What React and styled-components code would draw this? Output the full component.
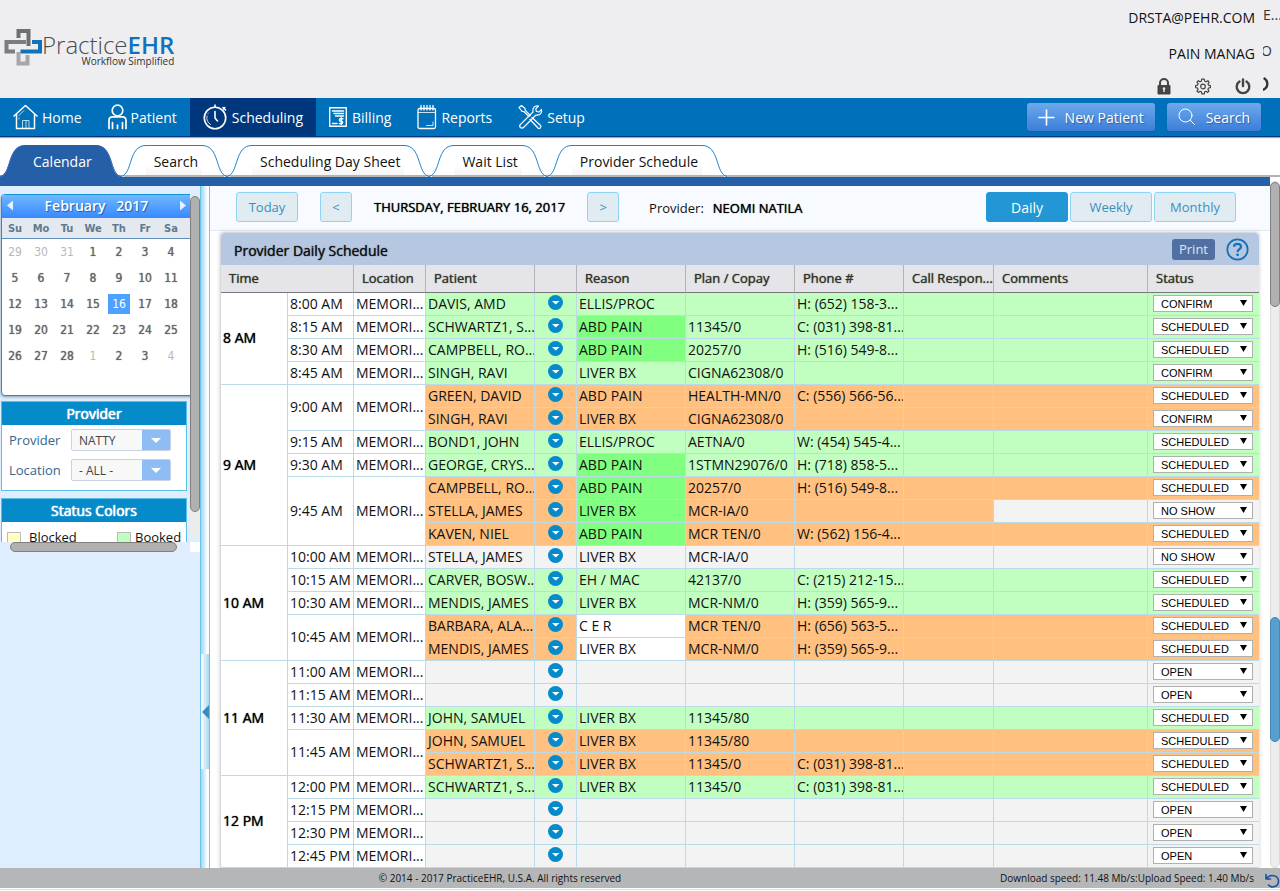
import React from 'react'
import styled, { createGlobalStyle, css } from 'styled-components'

const GlobalStyle = createGlobalStyle`
    * {
        box-sizing: border-box;
    }

    body {
        margin: 0;
        background: #ffffff;
        color: #111111;
        font-family: "Open Sans", "Noto Sans", sans-serif;
        font-size: 14px;
    }

    button, select, input {
        font-family: inherit;
        margin: 0;
    }

    a {
        color: inherit;
        text-decoration: none;
    }
`

const strong = css`
    font-weight: 400;
    text-shadow: 0 0 1px currentColor;
`

/* header */

const Page = styled.div`
    min-height: 100vh;
    display: flex;
    flex-direction: column;
`

const Header = styled.header`
    height: 98px;
    display: flex;
    justify-content: space-between;
    background: #eeeef0;
    overflow: hidden;
`

const Logo = styled.a`
    display: flex;
    align-items: flex-start;
    padding: 28px 0 0 4px;
`

const LogoText = styled.div`
    display: flex;
    flex-direction: column;
    align-items: flex-end;
    padding-top: 6px;
    color: #4b4c4e;
`

const LogoName = styled.span`
    font-size: 24px;
    line-height: 22px;
    font-weight: 300;

    b {
        color: #1072ba;
        font-weight: 600;
    }
`

const LogoTagline = styled.span`
    font-size: 10px;
    line-height: 10px;
    color: #333333;
`

const Account = styled.div`
    display: flex;
    gap: 8px;
`

const AccountLines = styled.div`
    display: flex;
    flex-direction: column;
    align-items: flex-end;
    font-size: 14px;
    line-height: 24px;
    gap: 12px;
    padding-top: 6px;
`

const AccountIcons = styled.div`
    display: flex;
    gap: 24px;
    padding-right: 4px;
`

const IconButton = styled.button`
    display: flex;
    border: none;
    padding: 0;
    background: none;
    color: #444444;
    cursor: pointer;
`

const Overflow = styled.div`
    width: 17px;
    display: flex;
    flex-direction: column;
    overflow: hidden;
    white-space: nowrap;
    font-size: 14px;
    line-height: 24px;
    gap: 12px;
    padding-top: 3px;
`

const Tail = styled.span`
    width: 17px;
    display: flex;
    justify-content: ${({ $end }) => ($end ? 'flex-end' : 'flex-start')};
    padding-right: ${({ $end }) => $end || 0}px;
    overflow: hidden;
    color: #333333;

    svg {
        flex: none;
    }
`

/* main menu */

const Nav = styled.nav`
    height: 39px;
    display: flex;
    align-items: stretch;
    background: #0070bb;
    border-bottom: 1px solid #00377c;
    box-shadow: 0 1px 1px #aaaaaa;
`

const NavItem = styled.a`
    display: flex;
    align-items: center;
    gap: 4px;
    padding: 0 13px;
    color: #ffffff;
    background: ${({ $active }) => ($active ? '#00377c' : 'none')};
    font-size: 14px;
`

const NavActions = styled.div`
    margin-left: auto;
    display: flex;
    align-items: center;
    gap: 12px;
    padding-right: 19px;
`

const ActionButton = styled.button`
    height: 28px;
    display: flex;
    align-items: center;
    gap: 10px;
    padding: 0 11px;
    border: none;
    border-radius: 3px;
    background: linear-gradient(#6ca9eb, #3c7dda);
    box-shadow: 0 1px 1px #1c5aa8;
    color: #ffffff;
    font-size: 14px;
    text-shadow: 1px 1px 1px #2a5ea8;
    cursor: pointer;
`

/* tabs */

const TabBar = styled.div`
    height: 40px;
    display: flex;
    align-items: flex-end;
    border-bottom: 2px solid #b4b4b4;
`

const TabLink = styled.a`
    height: 32px;
    display: flex;
    margin-bottom: -2px;
    color: ${({ $active }) => ($active ? '#ffffff' : '#111111')};
`

const TabLabel = styled.span`
    padding: 0 4px 0 8px;
    font-size: 14px;
    line-height: 31px;
    border-top: 1px solid ${({ $active }) => ($active ? '#245fa8' : '#1c83cc')};
    background: ${({ $active }) => ($active ? '#245fa8' : 'linear-gradient(#ffffff 60%, #f4f4f4 29px, #b4b4b4 29px)')};
`

const Workspace = styled.div`
    flex: 1;
    display: grid;
    grid-template-columns: minmax(0, 1fr) 10px;
`

const Frame = styled.div`
    display: flex;
    border-top: 9px solid #245fa8;
`

/* scroll bars */

const Track = styled.div`
    position: relative;
    background: #ececec;
    border-radius: 5px;
`

const PageTrack = styled(Track)`
    margin-top: 4px;
    border: 1px solid #dadada;
`

const Thumb = styled.div`
    border: 1px solid ${({ $blue }) => ($blue ? '#4787b0' : '#808080')};
    border-radius: 5px;
    background: ${({ $blue }) => ($blue ? '#579fce' : '#b0b0b0')};
`

const PageThumb = styled(Thumb)`
    position: absolute;
    left: -1px;
    right: -1px;
    top: ${({ $top }) => $top}px;
    height: 125px;
`

/* sidebar */

const Sidebar = styled.aside`
    width: 200px;
    flex: none;
    padding-top: 8px;
    background: #deeeff;
`

const ScrollPane = styled.div`
    display: grid;
    grid-template-columns: 190px 10px;
    grid-template-rows: 348px 10px;
`

const Viewport = styled.div`
    overflow: hidden;
    padding-left: 1px;
`

const VerticalTrack = styled(Track)`
    margin: 2px 0 5px;
    padding-bottom: 25px;
    display: flex;

    ${Thumb} {
        flex: 1;
    }
`

const HorizontalTrack = styled(Track)`
    margin: 0 10px;
    padding-right: 3px;
    display: flex;

    ${Thumb} {
        flex: 1;
    }
`

const Corner = styled.div`
    background: #ffffff;
`

const Calendar = styled.section`
    height: 202px;
    width: 200px;
    border: 1px solid #1593d2;
    border-radius: 4px;
    background: #ffffff;
    box-shadow: 0 1px 3px #8899aa;
    overflow: hidden;
`

const MonthBar = styled.div`
    height: 23px;
    width: 188px;
    display: flex;
    align-items: center;
    justify-content: space-between;
    padding: 0 4px 2px 5px;
    background: linear-gradient(#6fb7ff, #3889ff);
    color: #ffffff;
    text-shadow: 1px 1px 1px #1d5fae;
    font-size: 14px;
    font-weight: 600;
    white-space: pre;
`

const MonthButton = styled.button`
    width: 6px;
    height: 10px;
    padding: 0;
    border: none;
    background: #e4f2ff;
    clip-path: ${({ $next }) => ($next ? 'polygon(0 0, 100% 50%, 0 100%)' : 'polygon(100% 0, 0 50%, 100% 100%)')};
    cursor: pointer;
`

const DayTable = styled.table`
    width: 198px;
    border-collapse: separate;
    border-spacing: 0;
    table-layout: fixed;
    font-family: "DejaVu Sans Condensed", "DejaVu Sans", sans-serif;

    th {
        width: 26px;
        height: 21px;
        padding: 0;
        border-bottom: 1px solid #5f8db9;
        background: #e4e9f0;
        color: #5f7990;
        font-size: 11px;
    }

    td {
        height: 26px;
        padding: 0;
        text-align: center;
    }
`

const Day = styled.button`
    width: 22px;
    height: 20px;
    padding: 0;
    border: none;
    background: ${({ $selected }) => ($selected ? '#4ba3ff' : 'none')};
    color: ${({ $selected, $muted }) => ($selected ? '#ffffff' : $muted ? '#b8b8b8' : '#666666')};
    text-shadow: ${({ $muted, $selected }) => ($muted || $selected ? 'none' : '0 0 1px currentColor')};
    font-size: 12px;
    line-height: 20px;
    cursor: pointer;
`

const SideBox = styled.section`
    width: 186px;
    margin-top: ${({ $gap }) => $gap}px;
    border: 1px solid #5bbfe8;
    background: #ffffff;
`

const SideTitle = styled.h2`
    margin: 0;
    font-size: 14px;
    font-weight: 400;
    line-height: 23px;
    text-align: center;
    text-shadow: 0 0 1px currentColor, 0 0 1px currentColor;
    color: #ffffff;
    background: #058aca;
`

const FilterList = styled.div`
    display: flex;
    flex-direction: column;
    gap: 8px;
    padding: 4px 15px 9px 7px;
`

const FilterRow = styled.div`
    display: flex;
    align-items: center;
    justify-content: space-between;
    font-size: 13px;
    line-height: 20px;
    color: #33668c;
`

const FilterSelect = styled.div`
    position: relative;
    width: 100px;

    select {
        display: block;
        width: 100%;
        height: 22px;
        padding: 0 32px 0 7px;
        border: 1px solid #c9d2e4;
        border-radius: 2px;
        appearance: none;
        background: linear-gradient(to left, #8dbdf4 28px, #f8f8f9 28px);
        color: #444444;
        font-size: 12px;
    }

    svg {
        position: absolute;
        right: 10px;
        top: 9px;
        pointer-events: none;
    }
`

const Legend = styled.ul`
    display: grid;
    grid-template-columns: 110px 76px;
    margin: 0;
    padding: 5px 0 6px 5px;
    list-style: none;
    font-size: 13px;
    line-height: 20px;

    li {
        display: flex;
        align-items: center;
        gap: 8px;
    }

    li:nth-child(even) {
        gap: 4px;
    }
`

const Swatch = styled.i`
    width: 14px;
    height: 14px;
    margin-top: 3px;
    border: 1px solid #bbbbbb;
    background: ${({ $color }) => $color};
`

const Splitter = styled.div`
    width: 10px;
    flex: none;
    padding-top: 468px;
    border-left: 1px solid #6cc4ea;
    border-right: 1px solid #6cc4ea;
    background: linear-gradient(to right, #9bd8f2, #ffffff 80%);
`

const Grip = styled.button`
    width: 8px;
    height: 115px;
    display: flex;
    align-items: center;
    justify-content: flex-end;
    padding: 0;
    border: none;
    background: linear-gradient(to right, #ffffff, #a6daf0);
    cursor: pointer;
`

/* schedule */

const Content = styled.main`
    flex: 1;
    min-width: 0;
`

const Toolbar = styled.div`
    height: 45px;
    display: flex;
    align-items: center;
    padding: 0 34px 2px 26px;
    border-bottom: 1px solid #dcebf6;
    background: #f7fbff;
    font-size: 13px;
`

const DateGroup = styled.div`
    display: flex;
    align-items: center;
    gap: 22px;
`

const ProviderName = styled.div`
    display: flex;
    gap: 9px;
    margin-left: 30px;
    padding-top: 2px;
`

const Strong = styled.span`
    ${strong}
    color: #000000;
`

const ToolButton = styled.button`
    min-width: ${({ $width }) => $width}px;
    height: 30px;
    padding: 0;
    border: 1px solid ${({ $active }) => ($active ? '#2396d5' : '#8ed5f3')};
    border-radius: 3px;
    background: ${({ $active }) => ($active ? '#2396d5' : '#e0ecf2')};
    color: ${({ $active }) => ($active ? '#ffffff' : '#3c8fbf')};
    font-size: ${({ $size }) => $size || 13}px;
    cursor: pointer;
`

const ViewGroup = styled.div`
    margin-left: auto;
    display: flex;
    gap: 2px;
`

const Panel = styled.section`
    margin: 1px 11px 0 10px;
    border: solid #d8d8dc;
    border-width: 1px 0 0 1px;
    border-radius: 4px 4px 0 0;
    box-shadow: 0 0 4px #cccccc;
`

const PanelHead = styled.div`
    height: 32px;
    display: flex;
    align-items: center;
    justify-content: space-between;
    padding: 0 10px 0 13px;
    border-radius: 4px 4px 0 0;
    background: #b6c7e2;
`

const PanelTitle = styled.h1`
    margin: 0;
    ${strong}
    font-size: 14px;
    padding-top: 2px;
`

const PanelTools = styled.div`
    display: flex;
    align-items: center;
    gap: 11px;
`

const PrintButton = styled.button`
    width: 43px;
    height: 21px;
    padding: 0;
    border: none;
    border-radius: 3px;
    background: #526fa2;
    color: #dfe6f2;
    font-size: 13px;
    cursor: pointer;
`

const Schedule = styled.table`
    width: 100%;
    table-layout: fixed;
    border-collapse: separate;
    border-spacing: 0;
`

const HeadCell = styled.th`
    height: 28px;
    padding: 0 0 2px 8px;
    border-right: 1px solid #b4b4b8;
    border-bottom: 1px solid #77777b;
    background: #e5e5e9;
    color: #333328;
    ${strong}
    font-size: 13px;
    text-align: left;
    white-space: nowrap;
    overflow: hidden;

    &:last-child {
        border-right: none;
    }
`

const tones = {
    white: '#ffffff',
    open: '#f3f3f3',
    booked: '#c0ffc0',
    arrived: '#80ff80',
    double: '#ffc080',
}

const Cell = styled.td`
    height: 23px;
    padding: 0 0 0 2px;
    border-right: 1px solid #bcdbe8;
    border-bottom: 1px solid #bcdbe8;
    background: ${({ $tone }) => tones[$tone || 'white']};
    font-size: 14px;
    line-height: 22px;
    white-space: nowrap;
    overflow: hidden;

    &:last-child {
        border-right: none;
    }

    &[rowspan="2"] {
        padding-bottom: 1px;
    }
`

const HourCell = styled(Cell)`
    ${strong}
    padding-bottom: 1px;
    text-align: left;
    color: #000000;
`

const MenuCell = styled(Cell)`
    padding: 0 0 4px;

    ${IconButton} {
        margin: 0 auto;
    }
`

const StatusCell = styled(Cell)`
    padding: 0 0 1px 5px;
`

const StatusSelect = styled.div`
    position: relative;
    width: 100px;

    select {
        display: block;
        width: 100%;
        height: 17px;
        padding: 0 16px 0 7px;
        border: 1px solid #b0b0b0;
        border-radius: 0;
        appearance: none;
        background: #ffffff;
        color: #000000;
        font-family: "Liberation Sans", Arial, sans-serif;
        font-size: 11px;
    }

    svg {
        position: absolute;
        right: 6px;
        top: 5px;
        pointer-events: none;
    }
`

const Footer = styled.footer`
    display: flex;
    align-items: center;
    height: 20px;
    padding-bottom: 1px;
    margin-bottom: 3px;
    background: #b5b6b8;
    box-shadow: 0 1px #ffffff, 0 2px #dddddd;
    font-size: 10px;
    line-height: 16px;
    color: #111111;
`

const Copyright = styled.span`
    flex: 1;
    text-align: center;
`

const Speed = styled.div`
    display: flex;
    align-items: center;
    gap: 11px;

    ${IconButton} {
        color: #1c4fa0;
        padding-top: 5px;
    }
`

const line = { fill: 'none', stroke: 'currentColor', strokeLinecap: 'round', strokeLinejoin: 'round' }

const LogoMark = () => (
    <svg width="38" height="38" viewBox="0 0 38 38" fill="none" strokeWidth="4">
        <path d="M14.500 24V35.500H23.500V27" stroke="#a5a7aa" />
        <path d="M14.500 10V3H24.500V18" stroke="#6c6f73" />
        <path d="M22 14H2.500V23.500H11" stroke="#7b7d81" />
        <path d="M28 14H36V23.500H16.500" stroke="#1072ba" />
    </svg>
)

const HomeIcon = () => (
    <svg width="25" height="26" viewBox="0 0 25 26" {...line}>
        <path d="M1 12 12.500 1.500 24 12M3.500 10.500V24.500H21.500V10.500" strokeWidth="1.500" />
        <path d="M9.500 24.500V16.500H16V24.500M13 16.500V24M6 11.500 11 6.500M6 14V15" strokeWidth="1" opacity=".7" />
    </svg>
)

const PatientIcon = () => (
    <svg width="19" height="26" viewBox="0 0 19 26" {...line} strokeWidth="1.700">
        <circle cx="9.500" cy="6.500" r="5.300" />
        <path d="M1 24.500V16.500C1 14 2.500 12.800 4.500 12.800H14.500C16.500 12.800 18 14 18 16.500V24.500M4.500 24.500V18.500M14.500 24.500V18.500M9.500 21V24.500" />
    </svg>
)

const ClockIcon = () => (
    <svg width="25" height="26" viewBox="0 0 25 26" {...line} strokeWidth="1.600">
        <circle cx="12" cy="14" r="10.700" />
        <path d="M12 7.500V14L14.500 17M12 1V3M20 3.500 22.500 6M21.800 3.500 20.500 5" />
        <path d="M4 12A8 8 0 0 0 7.500 20.500M5 9.500 5.500 9" strokeWidth="1" opacity=".8" />
    </svg>
)

const BillingIcon = () => (
    <svg width="19" height="22" viewBox="0 0 19 22" {...line} strokeWidth="1.400">
        <rect x=".7" y="1.700" width="16.600" height="18.600" />
        <path d="M3.500 5H14.500M5 7.500H14.500M6.500 10H14.500M3.500 17.500H8" strokeWidth="1.400" />
        <path d="M14 12.800H11.500C10 12.800 10 15.200 11.500 15.200H12.500C14 15.200 14 17.600 12.500 17.600H10.300M12.300 11.800V18.600" strokeWidth="1.400" />
    </svg>
)

const ReportsIcon = () => (
    <svg width="20" height="26" viewBox="0 0 20 26" {...line} strokeWidth="1.300">
        <rect x="1" y="4.500" width="17.500" height="20" rx="1.500" />
        <path d="M4 1.500V6M7 1.500V6M10 1.500V6M13 1.500V6M16 1.500V6" />
        <path d="M1 8.500H18.500M16 18V21.500H9.500" strokeWidth="1" opacity=".8" />
    </svg>
)

const SetupIcon = () => (
    <svg width="25" height="26" viewBox="0 0 25 26" {...line} strokeWidth="1.200">
        <path d="M1 3.500 3.500 1.500 7 4.500 7.300 6.300 12.300 11.500M1 3.500 4 7.300 5.800 7.500 11 12.700M14 13.500 22.500 21.500C24 23 21.500 25.500 20 24L12 15.500" />
        <path d="M23.500 5.500C24.500 9 21.500 12 18 11L5.500 23.500C3.500 25.500 .3 22.500 2.500 20.300L15 8C14 4 17 1 20.500 2L17.800 4.800 18.300 7.500 21 8Z" />
    </svg>
)

const PlusIcon = () => (
    <svg width="17" height="17" viewBox="0 0 17 17" {...line} strokeWidth="1.600">
        <path d="M8.500 1V16M1 8.500H16" />
    </svg>
)

const SearchIcon = () => (
    <svg width="18" height="18" viewBox="0 0 18 18" {...line} strokeWidth="1">
        <circle cx="7.500" cy="7.500" r="6.500" />
        <path d="M12.300 12.300 16.500 16.500" />
    </svg>
)

const LockIcon = () => (
    <svg width="14" height="17" viewBox="0 0 14 17">
        <path d="M3 8V5A4 4 0 0 1 11 5V8" fill="none" stroke="#444444" strokeWidth="2" />
        <rect x=".5" y="7" width="13" height="9.500" rx="1" fill="#444444" />
        <path d="M7 9.300A1.300 1.300 0 0 1 7.700 11.700V14H6.300V11.700A1.300 1.300 0 0 1 7 9.300Z" fill="#eeeef0" />
    </svg>
)

const GearIcon = () => (
    <svg width="16" height="17" viewBox="0 0 16 17" {...line} strokeWidth="1.200">
        <circle cx="8" cy="8.500" r="2.300" />
        <path d="M6.700 1.200H9.300L9.700 3.200 11.200 3.800 12.900 2.700 14.100 4.400 13 5.900 13.500 7.200 15.400 7.500V9.600L13.500 10 12.900 11.400 14 13 12.600 14.400 11 13.300 9.600 13.900 9.300 15.800H6.800L6.400 13.900 5 13.300 3.400 14.400 2 13 3.100 11.400 2.500 10 .6 9.600V7.500L2.500 7.100 3.100 5.700 2 4.100 3.400 2.700 5 3.800 6.400 3.200Z" />
    </svg>
)

const PowerIcon = () => (
    <svg width="16" height="17" viewBox="0 0 16 17" {...line} strokeWidth="2.400">
        <path d="M4.500 3.600A6.300 6.300 0 1 0 11.500 3.600M8 1.500V8" />
    </svg>
)

const HelpIcon = () => (
    <svg width="23" height="23" viewBox="0 0 23 23" fill="none" stroke="#1072ba">
        <circle cx="11.500" cy="11.500" r="10.200" strokeWidth="1.800" />
        <path d="M8 8.800C8 4.800 15 4.800 15 8.800C15 11.200 11.600 11.300 11.600 14" strokeWidth="2.200" />
        <circle cx="11.600" cy="16.800" r="1.400" fill="#1072ba" stroke="none" />
    </svg>
)

const MenuIcon = () => (
    <svg width="15" height="15" viewBox="0 0 15 15">
        <circle cx="7.500" cy="7.500" r="7.500" fill="#058aca" />
        <path d="M4 6H11.500L7.700 9.500Z" fill="#ffffff" />
    </svg>
)

const RefreshIcon = () => (
    <svg width="15" height="15" viewBox="0 0 15 15" {...line} strokeWidth="1.600">
        <path d="M1 1.500V6H5.500M1.300 5.700C5 .5 13.500 2 13.500 8.300C13.500 14 6.500 15.500 3.500 12" />
    </svg>
)

const LeftCurve = ({ active }) => (
    <svg width="25" height="32" viewBox="0 0 25 32">
        <path d="M0 32C12 30 7 .5 25 .5V32Z" fill={active ? '#245fa8' : '#ffffff'} />
        {!active && <path d="M3 31H25" stroke="#b4b4b4" strokeWidth="2" />}
        <path d="M0 31.500C12 29 7 .5 25 .5" fill="none" stroke={active ? '#245fa8' : '#1c83cc'} />
    </svg>
)

const RightCurve = ({ active }) => (
    <svg width="25" height="32" viewBox="0 0 25 32">
        <path d="M25 32C13 30 18 .5 0 .5V32Z" fill={active ? '#245fa8' : '#ffffff'} />
        {!active && <path d="M0 31H22" stroke="#b4b4b4" strokeWidth="2" />}
        <path d="M25 31.500C13 29 18 .5 0 .5" fill="none" stroke={active ? '#245fa8' : '#1c83cc'} />
    </svg>
)

const Tab = ({ label, active }) => (
    <TabLink href="#" $active={active}>
        <LeftCurve active={active} />
        <TabLabel $active={active}>{label}</TabLabel>
        <RightCurve active={active} />
    </TabLink>
)

const menu = [
    ['Home', HomeIcon],
    ['Patient', PatientIcon],
    ['Scheduling', ClockIcon],
    ['Billing', BillingIcon],
    ['Reports', ReportsIcon],
    ['Setup', SetupIcon],
]

const tabs = ['Calendar', 'Search', 'Scheduling Day Sheet', 'Wait List', 'Provider Schedule']

const weekDays = ['Su', 'Mo', 'Tu', 'We', 'Th', 'Fr', 'Sa']

const weeks = [
    ['-29', '-30', '-31', '1', '2', '3', '4'],
    ['5', '6', '7', '8', '9', '10', '11'],
    ['12', '13', '14', '15', '16', '17', '18'],
    ['19', '20', '21', '22', '23', '24', '25'],
    ['26', '27', '28', '-1', '2', '3', '-4'],
]

const appt = (patient, reason, plan, phone, status = 'SCHEDULED', tone = 'booked', more = {}) =>
    ({ patient, reason, plan, phone, status, tone, ...more })

const open = () => appt('', '', '', '', 'OPEN', 'open')
const hot = { reasonTone: 'arrived' }
const plain = { reasonTone: 'white' }

const hours = [
    ['8 AM', [
        ['8:00 AM', [appt('DAVIS, AMD', 'ELLIS/PROC', '', 'H: (652) 158-3...', 'CONFIRM')]],
        ['8:15 AM', [appt('SCHWARTZ1, S...', 'ABD PAIN', '11345/0', 'C: (031) 398-81...', 'SCHEDULED', 'booked', hot)]],
        ['8:30 AM', [appt('CAMPBELL, RO...', 'ABD PAIN', '20257/0', 'H: (516) 549-8...', 'SCHEDULED', 'booked', hot)]],
        ['8:45 AM', [appt('SINGH, RAVI', 'LIVER BX', 'CIGNA62308/0', '', 'CONFIRM')]],
    ]],
    ['9 AM', [
        ['9:00 AM', [
            appt('GREEN, DAVID', 'ABD PAIN', 'HEALTH-MN/0', 'C: (556) 566-56...', 'SCHEDULED', 'double'),
            appt('SINGH, RAVI', 'LIVER BX', 'CIGNA62308/0', '', 'CONFIRM', 'double'),
        ]],
        ['9:15 AM', [appt('BOND1, JOHN', 'ELLIS/PROC', 'AETNA/0', 'W: (454) 545-4...')]],
        ['9:30 AM', [appt('GEORGE, CRYS...', 'ABD PAIN', '1STMN29076/0', 'H: (718) 858-5...', 'SCHEDULED', 'booked', hot)]],
        ['9:45 AM', [
            appt('CAMPBELL, RO...', 'ABD PAIN', '20257/0', 'H: (516) 549-8...', 'SCHEDULED', 'double', hot),
            appt('STELLA, JAMES', 'LIVER BX', 'MCR-IA/0', '', 'NO SHOW', 'double', { ...hot, endTone: 'open' }),
            appt('KAVEN, NIEL', 'ABD PAIN', 'MCR TEN/0', 'W: (562) 156-4...', 'SCHEDULED', 'double', hot),
        ]],
    ]],
    ['10 AM', [
        ['10:00 AM', [appt('STELLA, JAMES', 'LIVER BX', 'MCR-IA/0', '', 'NO SHOW', 'open')]],
        ['10:15 AM', [appt('CARVER, BOSW...', 'EH / MAC', '42137/0', 'C: (215) 212-15...')]],
        ['10:30 AM', [appt('MENDIS, JAMES', 'LIVER BX', 'MCR-NM/0', 'H: (359) 565-9...')]],
        ['10:45 AM', [
            appt('BARBARA, ALA...', 'C E R', 'MCR TEN/0', 'H: (656) 563-5...', 'SCHEDULED', 'double', plain),
            appt('MENDIS, JAMES', 'LIVER BX', 'MCR-NM/0', 'H: (359) 565-9...', 'SCHEDULED', 'double', plain),
        ]],
    ]],
    ['11 AM', [
        ['11:00 AM', [open()]],
        ['11:15 AM', [open()]],
        ['11:30 AM', [appt('JOHN, SAMUEL', 'LIVER BX', '11345/80', '')]],
        ['11:45 AM', [
            appt('JOHN, SAMUEL', 'LIVER BX', '11345/80', '', 'SCHEDULED', 'double'),
            appt('SCHWARTZ1, S...', 'LIVER BX', '11345/0', 'C: (031) 398-81...', 'SCHEDULED', 'double'),
        ]],
    ]],
    ['12 PM', [
        ['12:00 PM', [appt('SCHWARTZ1, S...', 'LIVER BX', '11345/0', 'C: (031) 398-81...')]],
        ['12:15 PM', [open()]],
        ['12:30 PM', [open()]],
        ['12:45 PM', [open()]],
    ]],
]

const statuses = ['SCHEDULED', 'CONFIRM', 'NO SHOW', 'OPEN']
const columns = ['Location', 'Patient', '', 'Reason', 'Plan / Copay', 'Phone #', 'Call Respon...', 'Comments', 'Status']
const widths = [67, 66, 72, 109, 42, 109, 109, 109, 90, null, 111]

const ScheduleRows = () => hours.flatMap(([hour, slots]) => {
    const total = slots.reduce((sum, [, items]) => sum + items.length, 0)

    return slots.flatMap(([time, items], slotIndex) => items.map((item, index) => (
        <tr key={`${time}-${index}`}>
            {slotIndex === 0 && index === 0 && <HourCell as="th" scope="rowgroup" rowSpan={total}>{hour}</HourCell>}
            {index === 0 && <Cell rowSpan={items.length}>{time}</Cell>}
            {index === 0 && <Cell rowSpan={items.length}>MEMORI...</Cell>}
            <Cell $tone={item.tone}>{item.patient}</Cell>
            <MenuCell $tone={item.tone}>
                <IconButton aria-label={`Actions ${time}`}><MenuIcon /></IconButton>
            </MenuCell>
            <Cell $tone={item.reasonTone || item.tone}>{item.reason}</Cell>
            <Cell $tone={item.tone}>{item.plan}</Cell>
            <Cell $tone={item.tone}>{item.phone}</Cell>
            <Cell $tone={item.tone} />
            <Cell $tone={item.endTone || item.tone} />
            <StatusCell $tone={item.endTone || item.tone}>
                <StatusSelect>
                    <select aria-label={`Status ${time}`} defaultValue={item.status}>
                        {statuses.map((status) => <option key={status}>{status}</option>)}
                    </select>
                    <svg width="7" height="6" viewBox="0 0 7 6"><path d="M0 0H7L3.500 6Z" /></svg>
                </StatusSelect>
            </StatusCell>
        </tr>
    )))
})

const Filter = ({ id, label, value }) => (
    <FilterRow>
        <label htmlFor={id}>{label}</label>
        <FilterSelect>
            <select id={id} defaultValue={value}>
                <option>{value}</option>
            </select>
            <svg width="10" height="5" viewBox="0 0 10 5"><path d="M0 0H10L5 5Z" fill="#ffffff" /></svg>
        </FilterSelect>
    </FilterRow>
)

const SidePanel = () => (
    <Sidebar>
        <ScrollPane>
            <Viewport>
                <Calendar>
                    <MonthBar>
                        <MonthButton aria-label="Previous month" />
                        <span>{'February   2017'}</span>
                        <MonthButton aria-label="Next month" $next />
                    </MonthBar>
                    <DayTable>
                        <thead>
                            <tr>
                                {weekDays.map((day) => <th key={day}>{day}</th>)}
                                <th aria-hidden="true" />
                            </tr>
                        </thead>
                        <tbody>
                            {weeks.map((week, row) => (
                                <tr key={row}>
                                    {week.map((day) => (
                                        <td key={day}>
                                            <Day $muted={day[0] === '-'} $selected={day === '16'}>{day.replace('-', '')}</Day>
                                        </td>
                                    ))}
                                </tr>
                            ))}
                        </tbody>
                    </DayTable>
                </Calendar>
                <SideBox $gap={5}>
                    <SideTitle>Provider</SideTitle>
                    <FilterList>
                        <Filter id="provider" label="Provider" value="NATTY" />
                        <Filter id="location" label="Location" value="- ALL -" />
                    </FilterList>
                </SideBox>
                <SideBox $gap={7}>
                    <SideTitle>Status Colors</SideTitle>
                    <Legend>
                        <li><Swatch $color="#ffffc0" />Blocked</li>
                        <li><Swatch $color="#c0ffc0" />Booked</li>
                    </Legend>
                </SideBox>
            </Viewport>
            <VerticalTrack><Thumb /></VerticalTrack>
            <HorizontalTrack><Thumb /></HorizontalTrack>
            <Corner />
        </ScrollPane>
    </Sidebar>
)

const App = () => {
    return (
        <>
            <GlobalStyle />
            <Page>
                <Header>
                    <Logo href="#">
                        <LogoMark />
                        <LogoText>
                            <LogoName>Practice<b>EHR</b></LogoName>
                            <LogoTagline>Workflow Simplified</LogoTagline>
                        </LogoText>
                    </Logo>
                    <Account>
                        <AccountLines>
                            <span>DRSTA@PEHR.COM</span>
                            <span>PAIN MANAG</span>
                            <AccountIcons>
                                <IconButton aria-label="Lock"><LockIcon /></IconButton>
                                <IconButton aria-label="Settings"><GearIcon /></IconButton>
                                <IconButton aria-label="Log out"><PowerIcon /></IconButton>
                            </AccountIcons>
                        </AccountLines>
                        <Overflow>
                            <Tail>E...</Tail>
                            <Tail $end={8}>O</Tail>
                            <Tail $end={11}><PowerIcon /></Tail>
                        </Overflow>
                    </Account>
                </Header>
                <Nav>
                    {menu.map(([label, Icon]) => (
                        <NavItem key={label} href="#" $active={label === 'Scheduling'}>
                            <Icon />
                            {label}
                        </NavItem>
                    ))}
                    <NavActions>
                        <ActionButton><PlusIcon />New Patient</ActionButton>
                        <ActionButton><SearchIcon />Search</ActionButton>
                    </NavActions>
                </Nav>
                <TabBar>
                    {tabs.map((label) => <Tab key={label} label={label} active={label === 'Calendar'} />)}
                </TabBar>
                <Workspace>
                    <Frame>
                        <SidePanel />
                        <Splitter>
                            <Grip aria-label="Collapse sidebar">
                                <svg width="7" height="14" viewBox="0 0 7 14"><path d="M7 0V14L0 7Z" fill="#3a8cc0" /></svg>
                            </Grip>
                        </Splitter>
                        <Content>
                            <Toolbar>
                                <DateGroup>
                                    <ToolButton $width={62}>Today</ToolButton>
                                    <ToolButton $width={32} aria-label="Previous day">&lt;</ToolButton>
                                    <Strong>THURSDAY, FEBRUARY 16, 2017</Strong>
                                    <ToolButton $width={32} aria-label="Next day">&gt;</ToolButton>
                                </DateGroup>
                                <ProviderName>
                                    <span>Provider:</span>
                                    <Strong>NEOMI NATILA</Strong>
                                </ProviderName>
                                <ViewGroup>
                                    <ToolButton $width={82} $active $size={14}>Daily</ToolButton>
                                    <ToolButton $width={82}>Weekly</ToolButton>
                                    <ToolButton $width={82}>Monthly</ToolButton>
                                </ViewGroup>
                            </Toolbar>
                            <Panel>
                                <PanelHead>
                                    <PanelTitle>Provider Daily Schedule</PanelTitle>
                                    <PanelTools>
                                        <PrintButton>Print</PrintButton>
                                        <IconButton aria-label="Help"><HelpIcon /></IconButton>
                                    </PanelTools>
                                </PanelHead>
                                <Schedule>
                                    <colgroup>
                                        {widths.map((width, index) => <col key={index} width={width || undefined} />)}
                                    </colgroup>
                                    <thead>
                                        <tr>
                                            <HeadCell colSpan={2}>Time</HeadCell>
                                            {columns.map((label) => <HeadCell key={label}>{label}</HeadCell>)}
                                        </tr>
                                    </thead>
                                    <tbody>
                                        <ScheduleRows />
                                    </tbody>
                                </Schedule>
                            </Panel>
                        </Content>
                    </Frame>
                    <PageTrack>
                        <PageThumb $top={0} />
                        <PageThumb $top={435} $blue />
                    </PageTrack>
                </Workspace>
                <Footer>
                    <Copyright>© 2014 - 2017 PracticeEHR, U.S.A. All rights reserved</Copyright>
                    <Speed>
                        <span>Download speed: 11.48 Mb/s:Upload Speed: 1.40 Mb/s</span>
                        <IconButton aria-label="Refresh"><RefreshIcon /></IconButton>
                    </Speed>
                </Footer>
            </Page>
        </>
    )
}

export default App
